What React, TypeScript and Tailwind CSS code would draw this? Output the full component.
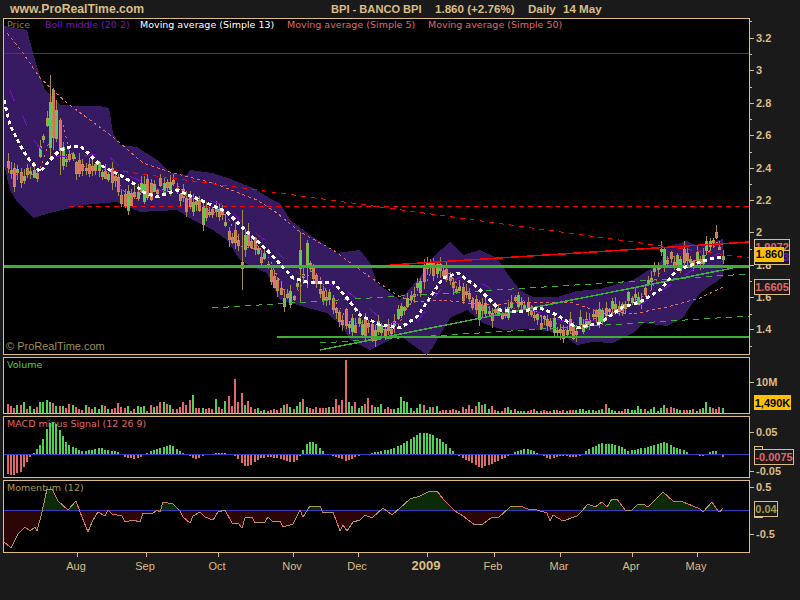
import React from 'react';

type Pt = [number, number];

// all chart coordinates below are page pixels, each svg viewBox is set to its panel
const bandUpper: Pt[] = [[4,26],[27,30],[33,53],[38,70],[45,90],[50,95],[60,105],[80,106],[100,106],[109,108],[113,133],[120,145],[137,147],[157,160],[170,173],[187,175],[190,170],[213,173],[233,180],[253,188],[273,200],[280,203],[290,220],[310,235],[337,253],[360,250],[370,263],[377,283],[400,300],[420,277],[433,257],[450,242],[463,255],[480,250],[497,258],[507,273],[520,290],[533,297],[557,297],[577,291],[600,289],[633,280],[660,263],[667,247],[687,241],[700,247],[707,243],[723,239]];
const bandLower: Pt[] = [[723,277],[700,293],[690,307],[683,318],[667,326],[643,323],[633,333],[613,343],[593,342],[577,345],[560,333],[533,329],[503,330],[483,323],[467,310],[450,318],[433,347],[427,355],[410,343],[400,335],[370,350],[350,340],[343,327],[327,313],[290,303],[280,300],[267,273],[253,267],[240,260],[227,240],[213,230],[193,220],[177,210],[140,212],[117,202],[83,205],[50,213],[33,218],[17,202],[10,190],[4,165]];
const sma13: Pt[] = [[4,100],[10,125],[20,145],[28,158],[40,172],[50,160],[60,150],[70,147],[80,146],[88,153],[100,165],[110,170],[120,175],[133,183],[143,192],[157,197],[177,190],[200,200],[227,212],[247,232],[267,250],[293,278],[307,282],[333,282],[347,298],[360,315],[380,325],[400,328],[417,317],[433,293],[443,278],[458,273],[477,287],[500,310],[517,312],[540,308],[557,315],[577,328],[600,323],[623,307],[640,302],[660,290],[677,270],[700,262],[717,257],[723,258]];
const sma50: Pt[] = [[7,33],[23,53],[40,78],[67,103],[113,137],[143,163],[173,173],[213,183],[257,200],[277,213],[300,232],[333,250],[367,275],[400,297],[417,302],[443,300],[467,303],[493,305],[517,302],[550,302],[573,303],[600,312],[633,314],[667,307],[700,298],[723,287]];
const bollMiddle: Pt[] = [[10,90],[15,103],[22,115],[28,128],[35,142],[45,153],[55,156],[75,157],[90,155],[105,153],[115,162],[130,176],[160,190],[180,195],[200,198],[225,205],[245,225],[265,240],[275,250],[290,265],[300,275],[320,280],[345,290],[365,305],[385,322],[415,325],[440,290],[460,277],[485,285],[505,300],[560,320],[600,320],[640,305],[670,285],[700,265],[723,250]];
const priceTrace: Pt[] = [[5,165],[15,175],[25,172],[35,178],[40,150],[47,115],[52,135],[60,150],[70,160],[80,165],[90,170],[100,168],[110,175],[120,195],[130,200],[140,190],[150,190],[160,185],[170,183],[180,195],[190,205],[200,210],[210,210],[220,215],[230,235],[240,245],[250,240],[260,255],[270,275],[280,295],[290,300],[300,275],[310,265],[320,295],[330,300],[340,320],[350,325],[360,325],[370,330],[380,330],[390,330],[400,310],[410,300],[420,280],[425,270],[435,268],[445,270],[455,285],[465,295],[475,305],[490,315],[500,315],[510,305],[520,300],[530,310],[540,320],[550,325],[560,330],[570,330],[580,325],[590,315],[600,312],[610,305],[620,310],[630,298],[640,300],[650,280],[660,255],[670,258],[680,260],[690,262],[700,258],[708,240],[715,238],[720,255],[723,260]];

// volume height per day, minus means a red bar
const volume = [-9,-7,-5,8,-8,11,-4,7,4,-6,11,11,13,11,-10,7,-7,7,-5,-9,8,-6,-4,-3,8,-6,-4,6,4,8,-7,4,-4,-5,-10,-6,-5,7,-2,-4,7,6,7,-2,-8,6,-7,-11,11,-9,8,-4,-4,-6,-11,-8,-13,18,-5,-5,5,-4,-5,-4,14,-6,-4,12,-17,-7,-34,-11,-20,8,-12,
  -6,-4,5,-2,3,-2,-3,-4,-3,-5,8,-9,6,-4,7,11,-14,6,-5,-4,-6,-5,-5,-5,6,-6,-14,-8,-13,-53,11,7,-11,5,7,-9,-15,-8,6,6,9,-4,-6,-4,4,5,16,12,11,5,-2,5,9,-8,3,6,-6,7,-2,-3,-3,-3,-4,-3,2,-6,-4,-8,-4,-7,11,-8,9,4,-7,-3,2,
  -2,-5,6,3,-4,2,2,2,-2,-3,-4,2,-2,-3,-2,-2,3,-3,-2,-3,2,-3,-3,3,4,4,2,3,3,-2,3,4,-9,5,3,2,-2,-2,-4,4,3,3,7,4,-4,2,4,6,2,5,8,-5,-6,-5,4,3,-3,-3,3,-4,2,-4,5,11,6,-5,-4,-6,5];

const macdTrace: Pt[] = [[7,-20],[12,-21],[20,-18],[28,-5],[31,0],[33,1],[40,10],[46,25],[50,33],[55,30],[60,22],[66,10],[72,7],[80,3],[85,3],[95,5],[100,6],[105,4],[115,3],[120,0],[125,-4],[135,-5],[140,-3],[145,0],[150,3],[160,6],[170,9],[175,6],[180,2],[185,0],[190,-3],[195,-5],[205,-1],[210,0],[220,1],[225,1],[230,0],[235,-3],[240,-8],[245,-13],[250,-11],[260,-4],[270,-3],[280,-5],[290,-8],[295,-8],[300,0],[305,9],[310,13],[315,10],[322,3],[325,0],[335,-3],[345,-7],[350,-5],[360,-1],[365,0],[372,1],[380,3],[390,5],[400,9],[410,15],[420,22],[430,20],[440,14],[450,5],[455,0],[480,-14],[500,-6],[510,0],[523,5],[528,5],[537,1],[540,0],[550,-6],[557,-2],[577,-3],[582,0],[583,2],[600,11],[617,9],[627,3],[633,4],[647,7],[663,12],[677,5],[683,4],[690,-1],[703,-2],[710,3],[715,3],[718,-1],[723,-3]];
const momentum: Pt[] = [[3,542],[11,549],[18,535],[25,528],[30,532],[35,528],[37,532],[42,513],[47,490],[52,490],[58,502],[68,511],[76,502],[80,513],[88,533],[92,523],[98,513],[105,517],[108,511],[112,515],[122,517],[125,523],[133,521],[140,523],[143,514],[152,515],[157,511],[160,513],[163,503],[173,505],[180,512],[183,518],[190,524],[193,517],[200,513],[205,518],[213,521],[218,513],[225,511],[232,524],[238,524],[242,529],[245,519],[252,518],[255,524],[265,523],[268,518],[273,523],[280,522],[283,528],[293,525],[300,511],[303,518],[310,507],[320,507],[323,514],[333,513],[340,532],[343,526],[347,532],[353,523],[360,521],[365,516],[372,519],[383,509],[392,516],[400,509],[410,500],[420,497],[428,493],[437,492],[443,500],[455,512],[463,517],[475,526],[483,525],[492,518],[498,519],[510,508],[520,507],[528,510],[537,511],[547,514],[550,522],[553,516],[563,522],[577,517],[582,512],[588,505],[595,508],[602,503],[607,508],[612,500],[617,500],[625,511],[632,511],[637,506],[643,505],[648,508],[663,493],[673,502],[683,503],[693,507],[700,510],[703,513],[712,503],[718,512],[720,513],[723,509]];

function interp(pts: Pt[], x: number) {
  if (x <= pts[0][0]) return pts[0][1];
  for (let i = 1; i < pts.length; i++) {
    if (x <= pts[i][0]) {
      const [x0, y0] = pts[i - 1];
      const [x1, y1] = pts[i];
      return y0 + ((y1 - y0) * (x - x0)) / (x1 - x0);
    }
  }
  return pts[pts.length - 1][1];
}

const toPoints = (pts: Pt[]) => pts.map((p) => p.join(',')).join(' ');
const barX = (i: number) => Math.floor(7 + i * 3.25);

// small repeatable noise so the candles come out the same on every render
let seed = 20090514;
const rnd = () => {
  seed = (seed * 16807) % 2147483647;
  return seed / 2147483647;
};

interface Candle {
  x: number;
  open: number;
  close: number;
  high: number;
  low: number;
  up: boolean;
}

const overrides: Record<number, Partial<Candle>> = {
  13: { high: 75, low: 160, open: 147, close: 102 },
  14: { high: 88, low: 150, open: 137, close: 90 },
  15: { high: 100, low: 142, open: 110, close: 138 },
  16: { high: 118, low: 175, open: 120, close: 150 },
  72: { high: 210, low: 290, open: 262, close: 268 },
  90: { high: 232, low: 303, open: 250, close: 268 },
  92: { high: 240, low: 288, open: 243, close: 265 },
};

const candles: Candle[] = volume.map((v, i) => {
  const x = barX(i);
  const up = v > 0;
  const mid = interp(priceTrace, x) + (rnd() - 0.5) * 11;
  const body = 2 + rnd() * rnd() * 20;
  const open = up ? mid + body / 2 : mid - body / 2;
  const close = up ? mid - body / 2 : mid + body / 2;
  const high = Math.min(open, close) - 1 - rnd() * 7;
  const low = Math.max(open, close) + 1 + rnd() * 7;
  return { x, open, close, high, low, up, ...overrides[i] };
});

const sma5: Pt[] = candles.map((c, i) => {
  const slice = candles.slice(Math.max(0, i - 4), i + 1);
  return [c.x + 1, slice.reduce((s, k) => s + k.close, 0) / slice.length];
});

function PriceChart() {
  return (
    <svg viewBox="4 19 745 336" shapeRendering="crispEdges" className="absolute inset-0 w-[745px] h-[336px]">
      <polygon points={toPoints([...bandUpper, ...bandLower])} fill="#361b63" />
      <line x1="4" y1="53.5" x2="749" y2="53.5" stroke="#d80000" />
      <line x1="69" y1="206.5" x2="749" y2="206.5" stroke="#ff0000" strokeDasharray="5 4" />
      {candles.map((c) => (
        <g key={c.x}>
          <rect x={c.x + 1} y={c.high} width="1" height={c.low - c.high} fill="#a08c44" />
          <rect x={c.x} y={Math.min(c.open, c.close)} width="3" height={Math.abs(c.close - c.open) + 1} fill="#b39a55" />
          <rect x={c.x + 1} y={Math.min(c.open, c.close) + 1} width="2" height={Math.abs(c.close - c.open) - 1} fill={c.up ? '#52d052' : '#e06c64'} />
        </g>
      ))}
      <polyline points={toPoints(bollMiddle)} fill="none" stroke="#7a10c8" strokeDasharray="12 16" />
      <polyline points={toPoints(sma50)} fill="none" stroke="#e06c64" strokeDasharray="3 3" />
      <polyline points={toPoints(sma5)} fill="none" stroke="#e06c64" strokeDasharray="2 4" />
      <line x1="113" y1="170" x2="749" y2="258" stroke="#ff0000" strokeDasharray="5 5" />
      <line x1="390" y1="265" x2="749" y2="242" stroke="#ff0000" strokeWidth="1.5" />
      <line x1="212" y1="308" x2="749" y2="274" stroke="#3cb034" strokeDasharray="6 5" />
      <line x1="320" y1="343" x2="749" y2="316" stroke="#3cb034" strokeDasharray="6 5" />
      <line x1="320" y1="350" x2="733" y2="268" stroke="#3cb034" strokeWidth="1.5" />
      <rect x="277" y="336" width="472" height="2" fill="#3cb034" />
      <rect x="4" y="265" width="745" height="3" fill="#3cb034" />
      <polyline points={toPoints(sma13)} fill="none" stroke="#ffffff" strokeWidth="3" strokeDasharray="4 3" />
    </svg>
  );
}

function VolumeChart() {
  return (
    <svg viewBox="4 359 745 55" shapeRendering="crispEdges" className="absolute inset-0 w-[745px] h-[55px]">
      {volume.map((v, i) => (
        <rect key={i} x={barX(i)} y={414 - Math.abs(v)} width="2" height={Math.abs(v)} fill={v > 0 ? '#50d050' : '#e06868'} />
      ))}
    </svg>
  );
}

function MacdChart() {
  return (
    <svg viewBox="4 418 745 60" shapeRendering="crispEdges" className="absolute inset-0 w-[745px] h-[60px]">
      {volume.map((_, i) => {
        const h = Math.round(interp(macdTrace, barX(i)));
        if (h === 0) return null;
        return <rect key={i} x={barX(i)} y={h > 0 ? 455 - h : 455} width="2" height={Math.abs(h)} fill={h > 0 ? '#50d050' : '#e06868'} />;
      })}
      <rect x="4" y="455" width="745" height="1" fill="#3a3ac0" />
    </svg>
  );
}

function MomentumChart() {
  const area = toPoints([...momentum, [723, 511], [3, 511]]);
  return (
    <svg viewBox="4 482 745 71" shapeRendering="crispEdges" className="absolute inset-0 w-[745px] h-[71px]">
      <defs>
        <clipPath id="above"><rect x="0" y="482" width="749" height="29" /></clipPath>
        <clipPath id="below"><rect x="0" y="511" width="749" height="42" /></clipPath>
      </defs>
      <polygon points={area} fill="#0a2a08" clipPath="url(#above)" />
      <polygon points={area} fill="#2c0606" clipPath="url(#below)" />
      <rect x="4" y="511" width="745" height="1" fill="#3a3ac0" />
      {momentum.slice(1).map((p, i) => {
        const prev = momentum[i];
        return <line key={i} x1={prev[0]} y1={prev[1]} x2={p[0]} y2={p[1]} stroke={p[1] > prev[1] ? '#e06868' : '#a89a50'} />;
      })}
    </svg>
  );
}

function AxisTicks({ top, major, minor }: { top: number; major: [number, string][]; minor: number[] }) {
  return (
    <>
      {minor.map((y) => (
        <div key={y} className="absolute left-0 w-[2px] h-px bg-[#dbbd85]" style={{ top: y - top }} />
      ))}
      {major.map(([y, label]) => (
        <React.Fragment key={y}>
          <div className="absolute left-0 w-[4px] h-px bg-[#dbbd85]" style={{ top: y - top }} />
          <div className="absolute left-[6px] text-[11px] leading-[14px] font-bold text-[#dbbd85]" style={{ top: y - top - 7 }}>{label}</div>
        </React.Fragment>
      ))}
    </>
  );
}

function ValueBox({ className, children }: { className: string; children: React.ReactNode }) {
  return (
    <div className={`absolute flex items-center justify-center border border-[#dbbd85] bg-[#1a1a1a] text-[11px] font-bold ${className}`}>
      {children}
    </div>
  );
}

const months: [number, string][] = [[77, 'Aug'], [146, 'Sep'], [218, 'Oct'], [293, 'Nov'], [358, 'Dec'], [427, '2009'], [494, 'Feb'], [560, 'Mar'], [632, 'Apr'], [697, 'May']];

export default function App() {
  return (
    <div className="w-[800px] h-[600px] overflow-hidden flex flex-col bg-[#1a1a1a] font-['Liberation_Sans',Arial,sans-serif] text-[#dbbd85]">
      <div className="h-[18px] flex items-center font-bold text-[11.6px] whitespace-pre">
        <span className="ml-[10px] w-[321px] text-[12.2px]">www.ProRealTime.com</span>
        <span className="w-[104px] text-[11.1px]">BPI - BANCO BPI</span>
        <span className="w-[93px]">1.860 (+2.76%)</span>
        <span className="w-[35px]">Daily</span>
        <span>14 May</span>
      </div>

      <div className="flex h-[338px]">
        <div className="relative ml-[3px] w-[747px] border border-[#dbbd85] bg-black">
          <div className="h-[11px] mt-[1px] flex items-center font-['DejaVu_Sans',sans-serif] text-[9.5px] whitespace-pre">
            <span className="ml-[3px] w-[38px] text-[#8a7f3a]">Price</span>
            <span className="w-[95px] text-[#7a10c8]">Boll middle (20 2)</span>
            <span className="w-[147px] text-white">Moving average (Simple 13)</span>
            <span className="w-[141px] text-[#e06868]">Moving average (Simple 5)</span>
            <span className="text-[#e06868]">Moving average (Simple 50)</span>
          </div>
          <PriceChart />
          <div className="absolute left-[2px] bottom-0 text-[11px] text-[#9a8f50]">© ProRealTime.com</div>
        </div>
        <div className="relative flex-1">
          <AxisTicks
            top={18}
            minor={[21, 54, 87, 119, 152, 184, 249, 281, 314, 346]}
            major={[[38, '3.2'], [70, '3'], [103, '2.8'], [135, '2.6'], [168, '2.4'], [200, '2.2'], [232, '2'], [265, '1.8'], [297, '1.6'], [329, '1.4']]}
          />
          <ValueBox className="left-[4px] top-[221px] w-[36px] h-[16px] text-[#e06868]">1.9072</ValueBox>
          <ValueBox className="left-[4px] top-[232px] w-[36px] h-[15px] text-[#7a10c8]">1.7773</ValueBox>
          <div className="absolute left-[5px] top-[229px] w-[29px] h-[15px] flex items-center justify-center bg-[#ffc000] text-black text-[11px] font-bold">1.860</div>
          <ValueBox className="left-[4px] top-[261px] w-[36px] h-[16px] text-[#e06868]">1.6605</ValueBox>
        </div>
      </div>

      <div className="flex h-[57px] mt-[2px]">
        <div className="relative ml-[3px] w-[747px] border border-[#dbbd85] bg-black">
          <div className="h-[11px] mt-[1px] ml-[3px] flex items-center font-['DejaVu_Sans',sans-serif] text-[9.5px] text-[#50d050]">Volume</div>
          <VolumeChart />
        </div>
        <div className="relative flex-1">
          <AxisTicks top={358} minor={[]} major={[[383, '10M']]} />
          <div className="absolute left-[4px] top-[38px] w-[37px] h-[15px] flex items-center justify-center bg-[#ffc000] text-black text-[11px] font-bold">1,490K</div>
        </div>
      </div>

      <div className="flex h-[62px] mt-[2px]">
        <div className="relative ml-[3px] w-[747px] border border-[#dbbd85] bg-black">
          <div className="h-[11px] mt-[1px] ml-[3px] flex items-center font-['DejaVu_Sans',sans-serif] text-[9.5px] text-[#e06868] whitespace-pre">MACD minus Signal (12 26 9)</div>
          <MacdChart />
        </div>
        <div className="relative flex-1">
          <AxisTicks top={417} minor={[]} major={[[433, '0.05'], [472, '-0.05']]} />
          <div className="absolute left-[4px] top-[30px] w-[9px] h-[6px] border border-[#dbbd85]" />
          <ValueBox className="left-[4px] top-[33px] w-[40px] h-[16px] text-[#e06868]">-0.0075</ValueBox>
        </div>
      </div>

      <div className="flex h-[73px] mt-[2px]">
        <div className="relative ml-[3px] w-[747px] border border-[#dbbd85] bg-black">
          <div className="h-[11px] mt-[1px] ml-[3px] flex items-center font-['DejaVu_Sans',sans-serif] text-[9.5px] text-[#a89a50] whitespace-pre">Momentum (12)</div>
          <MomentumChart />
        </div>
        <div className="relative flex-1">
          <AxisTicks top={481} minor={[]} major={[[488, '0.5'], [535, '-0.5']]} />
          <div className="absolute left-[4px] top-[33px] w-[9px] h-[5px] bg-[#dbbd85]" />
          <ValueBox className="left-[4px] top-[21px] w-[24px] h-[16px] text-[#a89a50]">0.04</ValueBox>
        </div>
      </div>

      <div className="relative h-[47px]">
        {months.map(([x, label]) => (
          <React.Fragment key={label}>
            <div className="absolute top-0 w-px h-[4px] bg-[#dbbd85]" style={{ left: x }} />
            <div
              className={label === '2009' ? 'absolute top-[4px] w-[50px] text-center text-[13px] leading-[18px] font-bold' : 'absolute top-[5px] w-[50px] text-center text-[11px] leading-[16px]'}
              style={{ left: x - 25 - 1 }}
            >
              {label}
            </div>
          </React.Fragment>
        ))}
      </div>
    </div>
  );
}
